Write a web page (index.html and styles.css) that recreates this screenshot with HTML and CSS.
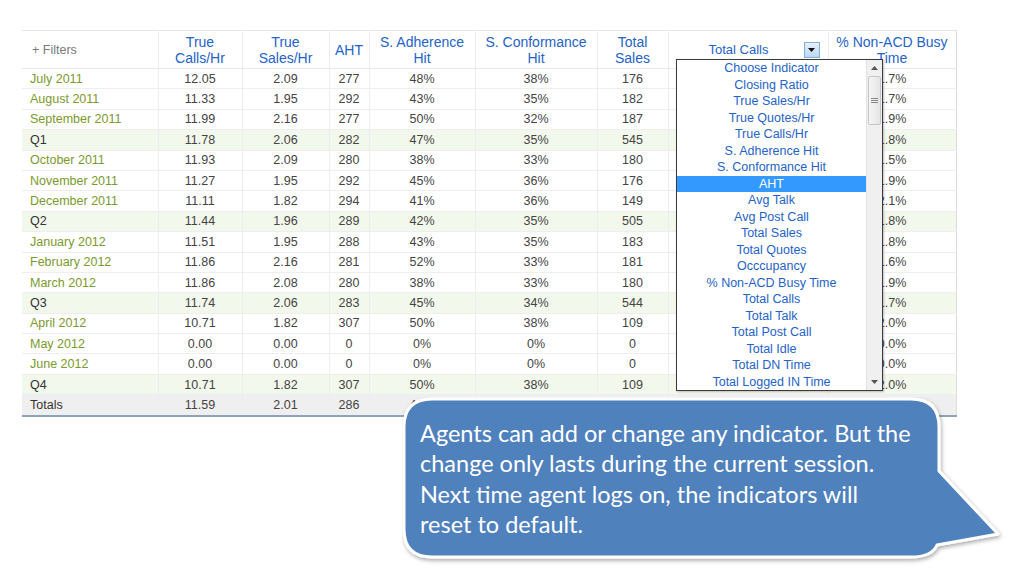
FILE: index.html
```html
<!DOCTYPE html>
<html>
<head>
<meta charset="utf-8">
<link rel="stylesheet" href="styles.css">
</head>
<body>
<div class="slide">
  <table class="grid">
    <colgroup>
      <col class="c-name"><col class="c-tch"><col class="c-tsh"><col class="c-aht"><col class="c-adh"><col class="c-conf"><col class="c-ts"><col class="c-tc"><col class="c-nacd">
    </colgroup>
    <thead>
      <tr>
        <th class="filters">+ Filters</th>
        <th>True<br>Calls/Hr</th>
        <th>True<br>Sales/Hr</th>
        <th>AHT</th>
        <th>S. Adherence<br>Hit</th>
        <th>S. Conformance<br>Hit</th>
        <th>Total<br>Sales</th>
        <th class="tc-head"><div class="tc-wrap"><span>Total Calls</span><span class="dd-btn"><svg width="7" height="4" viewBox="0 0 7 4"><path d="M0 0h7L3.5 4z" fill="#111"/></svg></span></div></th>
        <th>% Non-ACD Busy<br>Time</th>
      </tr>
    </thead>
    <tbody>
      <tr class="m"><td>July 2011</td><td>12.05</td><td>2.09</td><td>277</td><td>48%</td><td>38%</td><td>176</td><td></td><td>1.7%</td></tr>
      <tr class="m"><td>August 2011</td><td>11.33</td><td>1.95</td><td>292</td><td>43%</td><td>35%</td><td>182</td><td></td><td>1.7%</td></tr>
      <tr class="m"><td>September 2011</td><td>11.99</td><td>2.16</td><td>277</td><td>50%</td><td>32%</td><td>187</td><td></td><td>1.9%</td></tr>
      <tr class="q"><td>Q1</td><td>11.78</td><td>2.06</td><td>282</td><td>47%</td><td>35%</td><td>545</td><td></td><td>1.8%</td></tr>
      <tr class="m"><td>October 2011</td><td>11.93</td><td>2.09</td><td>280</td><td>38%</td><td>33%</td><td>180</td><td></td><td>1.5%</td></tr>
      <tr class="m"><td>November 2011</td><td>11.27</td><td>1.95</td><td>292</td><td>45%</td><td>36%</td><td>176</td><td></td><td>1.9%</td></tr>
      <tr class="m"><td>December 2011</td><td>11.11</td><td>1.82</td><td>294</td><td>41%</td><td>36%</td><td>149</td><td></td><td>2.1%</td></tr>
      <tr class="q"><td>Q2</td><td>11.44</td><td>1.96</td><td>289</td><td>42%</td><td>35%</td><td>505</td><td></td><td>1.8%</td></tr>
      <tr class="m"><td>January 2012</td><td>11.51</td><td>1.95</td><td>288</td><td>43%</td><td>35%</td><td>183</td><td></td><td>1.8%</td></tr>
      <tr class="m"><td>February 2012</td><td>11.86</td><td>2.16</td><td>281</td><td>52%</td><td>33%</td><td>181</td><td></td><td>1.6%</td></tr>
      <tr class="m"><td>March 2012</td><td>11.86</td><td>2.08</td><td>280</td><td>38%</td><td>33%</td><td>180</td><td></td><td>1.9%</td></tr>
      <tr class="q"><td>Q3</td><td>11.74</td><td>2.06</td><td>283</td><td>45%</td><td>34%</td><td>544</td><td></td><td>1.7%</td></tr>
      <tr class="m"><td>April 2012</td><td>10.71</td><td>1.82</td><td>307</td><td>50%</td><td>38%</td><td>109</td><td></td><td>2.0%</td></tr>
      <tr class="m"><td>May 2012</td><td>0.00</td><td>0.00</td><td>0</td><td>0%</td><td>0%</td><td>0</td><td></td><td>0.0%</td></tr>
      <tr class="m"><td>June 2012</td><td>0.00</td><td>0.00</td><td>0</td><td>0%</td><td>0%</td><td>0</td><td></td><td>0.0%</td></tr>
      <tr class="q"><td>Q4</td><td>10.71</td><td>1.82</td><td>307</td><td>50%</td><td>38%</td><td>109</td><td></td><td>2.0%</td></tr>
      <tr class="tot"><td>Totals</td><td>11.59</td><td>2.01</td><td>286</td><td>46%</td><td></td><td></td><td></td><td></td></tr>
    </tbody>
  </table>

  <div class="dropdown">
    <ul class="dd-list">
      <li>Choose Indicator</li>
      <li>Closing Ratio</li>
      <li>True Sales/Hr</li>
      <li>True Quotes/Hr</li>
      <li>True Calls/Hr</li>
      <li>S. Adherence Hit</li>
      <li>S. Conformance Hit</li>
      <li class="sel">AHT</li>
      <li>Avg Talk</li>
      <li>Avg Post Call</li>
      <li>Total Sales</li>
      <li>Total Quotes</li>
      <li>Occcupancy</li>
      <li>% Non-ACD Busy Time</li>
      <li>Total Calls</li>
      <li>Total Talk</li>
      <li>Total Post Call</li>
      <li>Total Idle</li>
      <li>Total DN Time</li>
      <li>Total Logged IN Time</li>
    </ul>
    <div class="sb">
      <div class="sb-arrow"><svg width="7" height="4" viewBox="0 0 7 4"><path d="M0 4h7L3.5 0z" fill="#555"/></svg></div>
      <div class="sb-thumb"><svg width="7" height="7" viewBox="0 0 7 7"><path d="M0 1.5h7M0 3.5h7M0 5.5h7" stroke="#888" stroke-width="1"/></svg></div>
      <div class="sb-track"></div>
      <div class="sb-arrow"><svg width="7" height="4" viewBox="0 0 7 4"><path d="M0 0h7L3.5 4z" fill="#555"/></svg></div>
    </div>
  </div>

  <div class="callout">
    <svg class="callout-shape" width="610" height="175" viewBox="0 0 610 175">
      <defs>
        <filter id="sh" x="-5%" y="-5%" width="115%" height="125%">
          <feDropShadow dx="1" dy="2" stdDeviation="2" flood-color="#000" flood-opacity="0.35"/>
        </filter>
      </defs>
      <path d="M30 2 H509 Q537 2 537 30 V74 L596 137 L535 148 Q530 160 509 160 H30 Q2 160 2 132 V30 Q2 2 30 2 Z" fill="#4f81bd" stroke="#fff" stroke-width="3" stroke-linejoin="round" filter="url(#sh)"/>
    </svg>
    <p class="callout-text">Agents can add or change any indicator. But the<br>change only lasts during the current session.<br>Next time agent logs on, the indicators will<br>reset to default.</p>
  </div>
</div>
</body>
</html>
```

FILE: styles.css
```css
html, body {
  margin: 0;
  padding: 0;
  background: #ffffff;
}

.slide {
  position: relative;
  width: 1024px;
  height: 576px;
  overflow: hidden;
  padding-top: 30px;
  padding-left: 22px;
  box-sizing: border-box;
  font-family: "Liberation Sans", Arial, sans-serif;
}

.grid {
  border-collapse: collapse;
  table-layout: fixed;
  width: 934px;
  border-top: 1px solid #e6e6e6;
  border-right: 1px solid #dcdcdc;
  border-bottom: 2px solid #8fa3bc;
}

.c-name { width: 136px; }
.c-tch { width: 84px; }
.c-tsh { width: 87px; }
.c-aht { width: 40px; }
.c-adh { width: 106px; }
.c-conf { width: 122px; }
.c-ts { width: 71px; }
.c-tc { width: 160px; }
.c-nacd { width: 128px; }

.grid th {
  height: 37px;
  padding: 0;
  font-weight: normal;
  font-size: 14px;
  line-height: 16px;
  color: #2463c8;
  text-align: center;
  vertical-align: middle;
  border-left: 1px solid #ececec;
  border-bottom: 1px solid #e8e8e8;
}

.grid th:first-child { border-left: none; }

.grid th.filters {
  text-align: left;
  padding-left: 10px;
  font-size: 12.5px;
  color: #7a7a7a;
}

.tc-wrap {
  display: flex;
  align-items: center;
  justify-content: flex-end;
  gap: 35px;
  padding-right: 8px;
}

.tc-wrap span:first-child {
  font-size: 13px;
}

.dd-btn {
  display: flex;
  align-items: center;
  justify-content: center;
  width: 14px;
  height: 14px;
  border: 1px solid #86aedb;
  background: linear-gradient(#e4f0fc, #bcd7f3);
}

.grid td {
  height: 19.4px;
  padding: 0;
  font-size: 12.5px;
  color: #444444;
  text-align: center;
  vertical-align: middle;
  border-left: 1px solid #ededed;
  border-bottom: 1px solid #eeeeee;
  white-space: nowrap;
  overflow: hidden;
}

.grid td:first-child {
  text-align: left;
  padding-left: 8px;
  border-left: none;
}

.grid tr.m td:first-child { color: #7b9a2c; }

.grid tr.q td { background: #f3f8ec; }
.grid tr.q td:first-child { color: #333333; }

.grid tr.tot td { background: #efefef; border-bottom: none; }
.grid tr.tot td:first-child { color: #333333; }

.dropdown {
  position: absolute;
  left: 676px;
  top: 59px;
  width: 205px;
  height: 330px;
  display: flex;
  background: #ffffff;
  border: 1px solid #3a3a3a;
  box-shadow: 1px 1px 2px rgba(0,0,0,0.25);
}

.dd-list {
  list-style: none;
  margin: 0;
  padding: 0;
  flex: 1;
}

.dd-list li {
  height: 16.5px;
  line-height: 16.5px;
  font-size: 12.5px;
  color: #2463c8;
  text-align: center;
  white-space: nowrap;
}

.dd-list li.sel {
  background: #3399ff;
  color: #ffffff;
}

.sb {
  width: 15px;
  display: flex;
  flex-direction: column;
  background: #f0f0f0;
  border-left: 1px solid #e2e2e2;
}

.sb-arrow {
  height: 16px;
  display: flex;
  align-items: center;
  justify-content: center;
}

.sb-thumb {
  height: 47px;
  margin: 0 1px;
  display: flex;
  align-items: center;
  justify-content: center;
  background: linear-gradient(90deg, #f6f6f6, #e4e4e4);
  border: 1px solid #c6c6c6;
  border-radius: 2px;
}

.sb-track { flex: 1; }

.callout {
  position: absolute;
  left: 402px;
  top: 397px;
  width: 610px;
  height: 175px;
}

.callout-shape {
  position: absolute;
  left: 0;
  top: 0;
}

.callout-text {
  position: relative;
  margin: 0;
  padding: 21px 0 0 18px;
  font-family: Lato, "Open Sans", sans-serif;
  font-size: 23.5px;
  line-height: 30.3px;
  color: #ffffff;
  white-space: nowrap;
}
```
